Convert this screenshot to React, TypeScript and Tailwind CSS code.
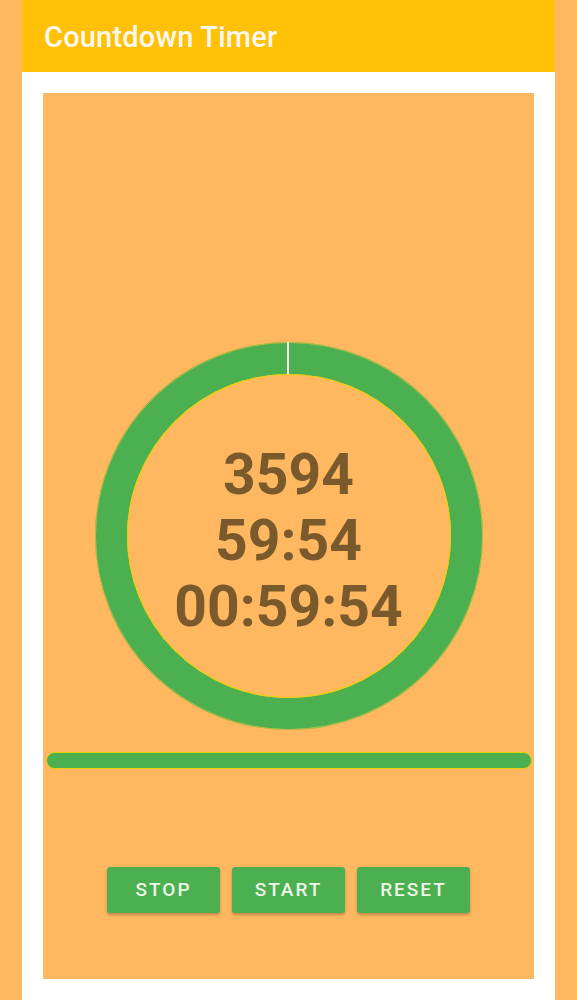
import React, { useState } from 'react';

const RING_SIZE = 388;

const TimerRing: React.FC = () => {
  const c = RING_SIZE / 2;
  const r = c - 16;
  return (
    <svg width={RING_SIZE} height={RING_SIZE} viewBox={`0 0 ${RING_SIZE} ${RING_SIZE}`}>
      <circle cx={c} cy={c} r={r} fill="none" stroke="#4CAF50" strokeWidth={32} />
      <circle cx={c} cy={c} r={c - 0.5} fill="none" stroke="#E8C43A" strokeWidth={1} opacity={0.7} />
      <circle cx={c} cy={c} r={c - 32.5} fill="none" stroke="#E8D010" strokeWidth={1.2} />
      {/* progress marker */}
      <line x1={c - 1} y1={0} x2={c - 1} y2={32} stroke="#F4FBEA" strokeWidth={2} />
    </svg>
  );
};

export default function App() {
  const [seconds] = useState(3594);

  const mm = String(Math.floor((seconds % 3600) / 60)).padStart(2, '0');
  const ss = String(seconds % 60).padStart(2, '0');
  const hh = String(Math.floor(seconds / 3600)).padStart(2, '0');

  return (
    <div
      className="min-h-[1000px] w-[577px] bg-[#FFB860] px-[22px]"
      style={{ fontFamily: 'Roboto, "Noto Sans", sans-serif' }}
    >
      <div className="flex min-h-[1000px] flex-col bg-white">
        {/* Toolbar */}
        <div className="flex h-[72px] items-center bg-[#FFC107] pl-[22px] pt-[3px]">
          <h1 className="text-[29px] font-medium tracking-[0.2px] text-[#FFF8EC]">Countdown Timer</h1>
        </div>

        {/* Content */}
        <div className="mx-[21px] mt-[21px] mb-[21px] flex h-[886px] flex-col items-center bg-[#FFB860]">
          <div className="relative mt-[249px]">
            <TimerRing />
            <div className="absolute inset-0 flex flex-col items-center justify-center pt-[9px] text-[57px] font-bold leading-[66px] text-[#7A5A2C]">
              <span>{seconds}</span>
              <span>
                {mm}:{ss}
              </span>
              <span>
                {hh}:{mm}:{ss}
              </span>
            </div>
          </div>

          <div className="mt-[22px] w-full pl-[3px] pr-[2px]">
            <div className="h-[17px] w-full rounded-full border border-[#E8D010] bg-[#4CAF50]" />
          </div>

          <div className="mt-[98px] flex gap-[12px]">
            {['STOP', 'START', 'RESET'].map((label) => (
              <button
                key={label}
                className="flex h-[46px] w-[113px] items-center justify-center rounded-[3px] bg-[#4CAF50] text-[19px] font-medium tracking-[2px] text-[#EEF6E8] shadow-[0_2px_3px_rgba(0,0,0,0.25)]"
              >
                {label}
              </button>
            ))}
          </div>
        </div>
      </div>
    </div>
  );
}
